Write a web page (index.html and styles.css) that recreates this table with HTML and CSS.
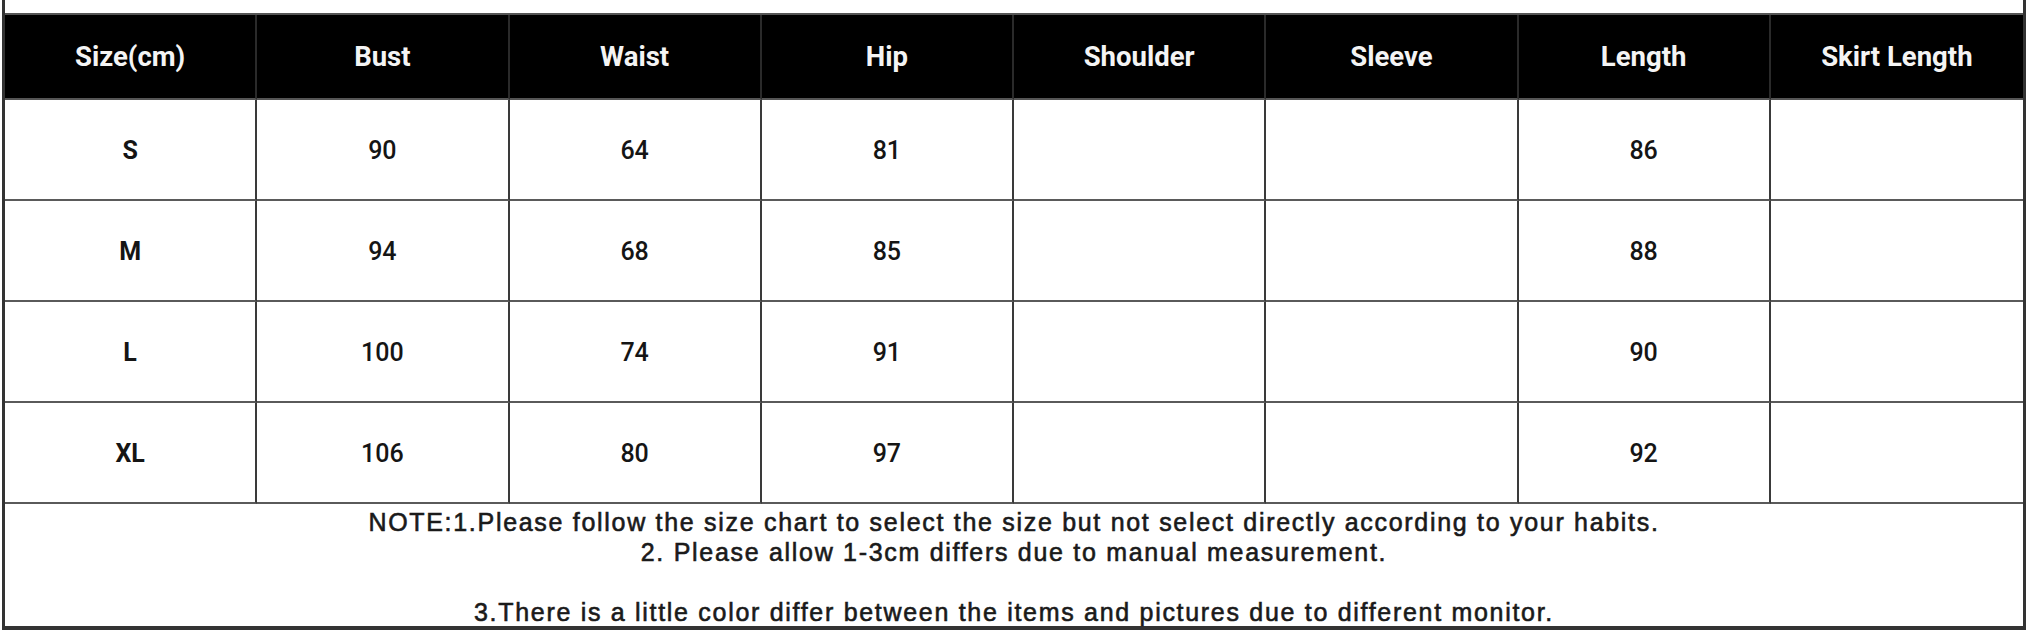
FILE: index.html
```html
<!DOCTYPE html>
<html lang="en">
<head>
<meta charset="utf-8">
<title>Size Chart</title>
<link rel="stylesheet" href="styles.css">
</head>
<body>
<div class="frame">
  <div class="top-strip"></div>
  <div class="chart">
    <div class="cell head">Size(cm)</div>
    <div class="cell head">Bust</div>
    <div class="cell head">Waist</div>
    <div class="cell head">Hip</div>
    <div class="cell head">Shoulder</div>
    <div class="cell head">Sleeve</div>
    <div class="cell head">Length</div>
    <div class="cell head last">Skirt Length</div>

    <div class="cell size">S</div>
    <div class="cell">90</div>
    <div class="cell">64</div>
    <div class="cell">81</div>
    <div class="cell"></div>
    <div class="cell"></div>
    <div class="cell">86</div>
    <div class="cell last"></div>

    <div class="cell size">M</div>
    <div class="cell">94</div>
    <div class="cell">68</div>
    <div class="cell">85</div>
    <div class="cell"></div>
    <div class="cell"></div>
    <div class="cell">88</div>
    <div class="cell last"></div>

    <div class="cell size">L</div>
    <div class="cell">100</div>
    <div class="cell">74</div>
    <div class="cell">91</div>
    <div class="cell"></div>
    <div class="cell"></div>
    <div class="cell">90</div>
    <div class="cell last"></div>

    <div class="cell size">XL</div>
    <div class="cell">106</div>
    <div class="cell">80</div>
    <div class="cell">97</div>
    <div class="cell"></div>
    <div class="cell"></div>
    <div class="cell">92</div>
    <div class="cell last"></div>
  </div>
  <div class="note">
    <div class="note-line l1">NOTE:1.Please follow the size chart to select the size but not select directly according to your habits.</div>
    <div class="note-line l2">2. Please allow 1-3cm differs due to manual measurement.</div>
    <div class="note-line l3">3.There is a little color differ between the items and pictures due to different monitor.</div>
  </div>
</div>
</body>
</html>
```

FILE: styles.css
```css
* {
  box-sizing: border-box;
}

html, body {
  margin: 0;
  padding: 0;
  background: #ffffff;
}

body {
  width: 2026px;
  height: 632px;
  overflow: hidden;
}

.frame {
  margin-left: 2px;
  width: 2024px;
  border-left: 3px solid #333333;
  border-right: 3px solid #333333;
  border-bottom: 4px solid #333333;
  background: #ffffff;
}

.top-strip {
  height: 15px;
  border-bottom: 2px solid #555555;
}

.chart {
  display: grid;
  grid-template-columns: repeat(8, 1fr);
}

.cell {
  height: 101px;
  padding-top: 2px;
  display: flex;
  align-items: center;
  justify-content: center;
  border-right: 2px solid #3a3a3a;
  border-bottom: 2px solid #5a5a5a;
  font-family: Roboto, "Liberation Sans", Arial, sans-serif;
  font-weight: 500;
  font-size: 25px;
  color: #151515;
}

.cell.last {
  border-right: none;
}

.cell.size {
  font-weight: 700;
}

.cell.head {
  height: 85px;
  padding-top: 0;
  background: #000000;
  color: #f4f4f4;
  font-weight: 700;
  font-size: 27.5px;
  border-right-color: #2a2a2a;
  border-bottom-color: #555555;
}

.note {
  height: 122px;
  padding-top: 4px;
  text-align: center;
  font-family: "Liberation Sans", Arial, sans-serif;
  font-size: 25px;
  letter-spacing: 1.7px;
  color: #1a1a1a;
  -webkit-text-stroke: 0.6px #1a1a1a;
}

.note-line {
  line-height: 28px;
  white-space: nowrap;
}

.note-line.l2 {
  margin-top: 2px;
}

.note-line.l3 {
  margin-top: 32px;
}
```
